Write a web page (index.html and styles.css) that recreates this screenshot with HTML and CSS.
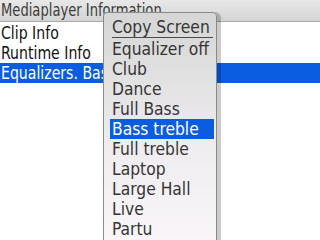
FILE: index.html
```html
<!DOCTYPE html>
<html>
<head>
<meta charset="utf-8">
<link rel="stylesheet" href="styles.css">
</head>
<body>
<div class="screen">
  <div class="title"><span class="title-text">Mediaplayer Information</span></div>
  <ul class="list">
    <li class="row"><span class="row-text">Clip Info</span></li>
    <li class="row"><span class="row-text">Runtime Info</span></li>
    <li class="row selected"><span class="row-text">Equalizers. Bass treble</span></li>
  </ul>
  <div class="menu">
    <div class="item"><span class="item-text">Copy Screen</span></div>
    <div class="sep"></div>
    <div class="item"><span class="item-text">Equalizer off</span></div>
    <div class="item"><span class="item-text">Club</span></div>
    <div class="item"><span class="item-text">Dance</span></div>
    <div class="item"><span class="item-text">Full Bass</span></div>
    <div class="item active"><span class="item-text">Bass treble</span></div>
    <div class="item"><span class="item-text">Full treble</span></div>
    <div class="item"><span class="item-text">Laptop</span></div>
    <div class="item"><span class="item-text">Large Hall</span></div>
    <div class="item"><span class="item-text">Live</span></div>
    <div class="item"><span class="item-text">Partu</span></div>
  </div>
</div>
</body>
</html>
```
FILE: styles.css
```css
html, body {
  margin: 0;
  padding: 0;
}
body {
  width: 320px;
  height: 240px;
  overflow: hidden;
  background: #ffffff;
  font-family: "DejaVu Sans Condensed", "DejaVu Sans", sans-serif;
  font-size: 18px;
  color: #111;
}
.screen {
  position: relative;
  width: 320px;
  height: 240px;
  overflow: hidden;
}
.title {
  height: 21px;
  line-height: 20px;
  padding-left: 1px;
  background: linear-gradient(#e8e8e8, #d4d4d4);
  border-bottom: 1px solid #a8a8a8;
  color: #3c3c3c;
  white-space: nowrap;
}
.title-text {
  display: inline-block;
  transform: scaleX(0.81);
  transform-origin: left center;
}
.list {
  list-style: none;
  margin: 0;
  padding: 1px 0 0 0;
}
.row {
  height: 20px;
  line-height: 20px;
  padding-left: 1px;
  white-space: nowrap;
}
.row-text {
  display: inline-block;
  transform: scaleX(0.87);
  transform-origin: left center;
}
.row.selected {
  background: #0a5ce0;
  color: #ffffff;
}
.menu {
  position: absolute;
  left: 103px;
  top: 12px;
  width: 104px;
  height: 240px;
  padding: 4px 2px 0 6px;
  border: 1px solid #8a8a8a;
  border-radius: 4px;
  background: linear-gradient(#d6d6d6, #efedef 55%, #fbf7fb);
  box-shadow: 2px 2px 0 2px rgba(0, 0, 0, 0.2);
}
.item {
  height: 20px;
  line-height: 20px;
  padding-left: 2px;
  color: #353535;
  white-space: nowrap;
}
.item-text {
  display: inline-block;
  transform: scaleX(0.96);
  transform-origin: left center;
}
.item.active {
  background: #0a5ce0;
  color: #ffffff;
}
.sep {
  height: 1px;
  margin: 0 1px 1px 2px;
  background: #4a4a4a;
}
```
